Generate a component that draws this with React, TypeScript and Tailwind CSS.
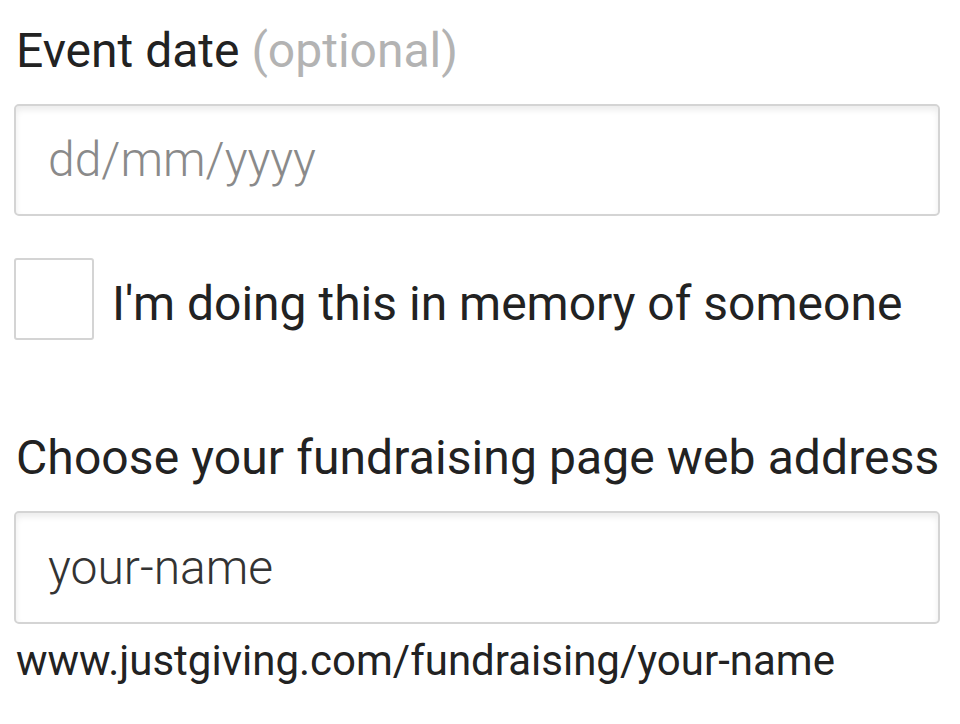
import React from "react";

export default function App() {
  return (
    <div
      className="min-h-[724px] w-[960px] bg-white pl-[14px] pr-[20px] pt-[22px] text-[#222]"
      style={{ fontFamily: "Roboto, 'Noto Sans', sans-serif" }}
    >
      <label className="block pl-[2px] text-[48px] leading-[58px]">
        Event date <span className="text-[#b3b3b3]">(optional)</span>
      </label>

      <div className="mt-[24px] flex h-[112px] items-center rounded-[5px] border-2 border-[#d4d4d4] bg-white pl-[32px] shadow-[inset_0_4px_6px_rgba(0,0,0,0.08)]">
        <span className="text-[48px] font-light text-[#8a8a8a]">dd/mm/yyyy</span>
      </div>

      <div className="mt-[42px] flex items-center gap-[18px]">
        <div className="h-[82px] w-[80px] shrink-0 rounded-[3px] border-2 border-[#d4d4d4] bg-white" />
        <span className="pt-[10px] text-[48px] leading-none">I'm doing this in memory of someone</span>
      </div>

      <label className="mt-[89px] block pl-[2px] text-[48px] leading-[58px] tracking-[0.1px]">
        Choose your fundraising page web address
      </label>

      <div className="mt-[24px] flex h-[113px] items-center rounded-[5px] border-2 border-[#d4d4d4] bg-white pl-[32px] shadow-[inset_0_4px_6px_rgba(0,0,0,0.08)]">
        <span className="text-[48px] font-light text-[#333]">your-name</span>
      </div>

      <p className="mt-[12px] pl-[2px] text-[42px] leading-[50px]">
        www.justgiving.com/fundraising/your-name
      </p>
    </div>
  );
}
